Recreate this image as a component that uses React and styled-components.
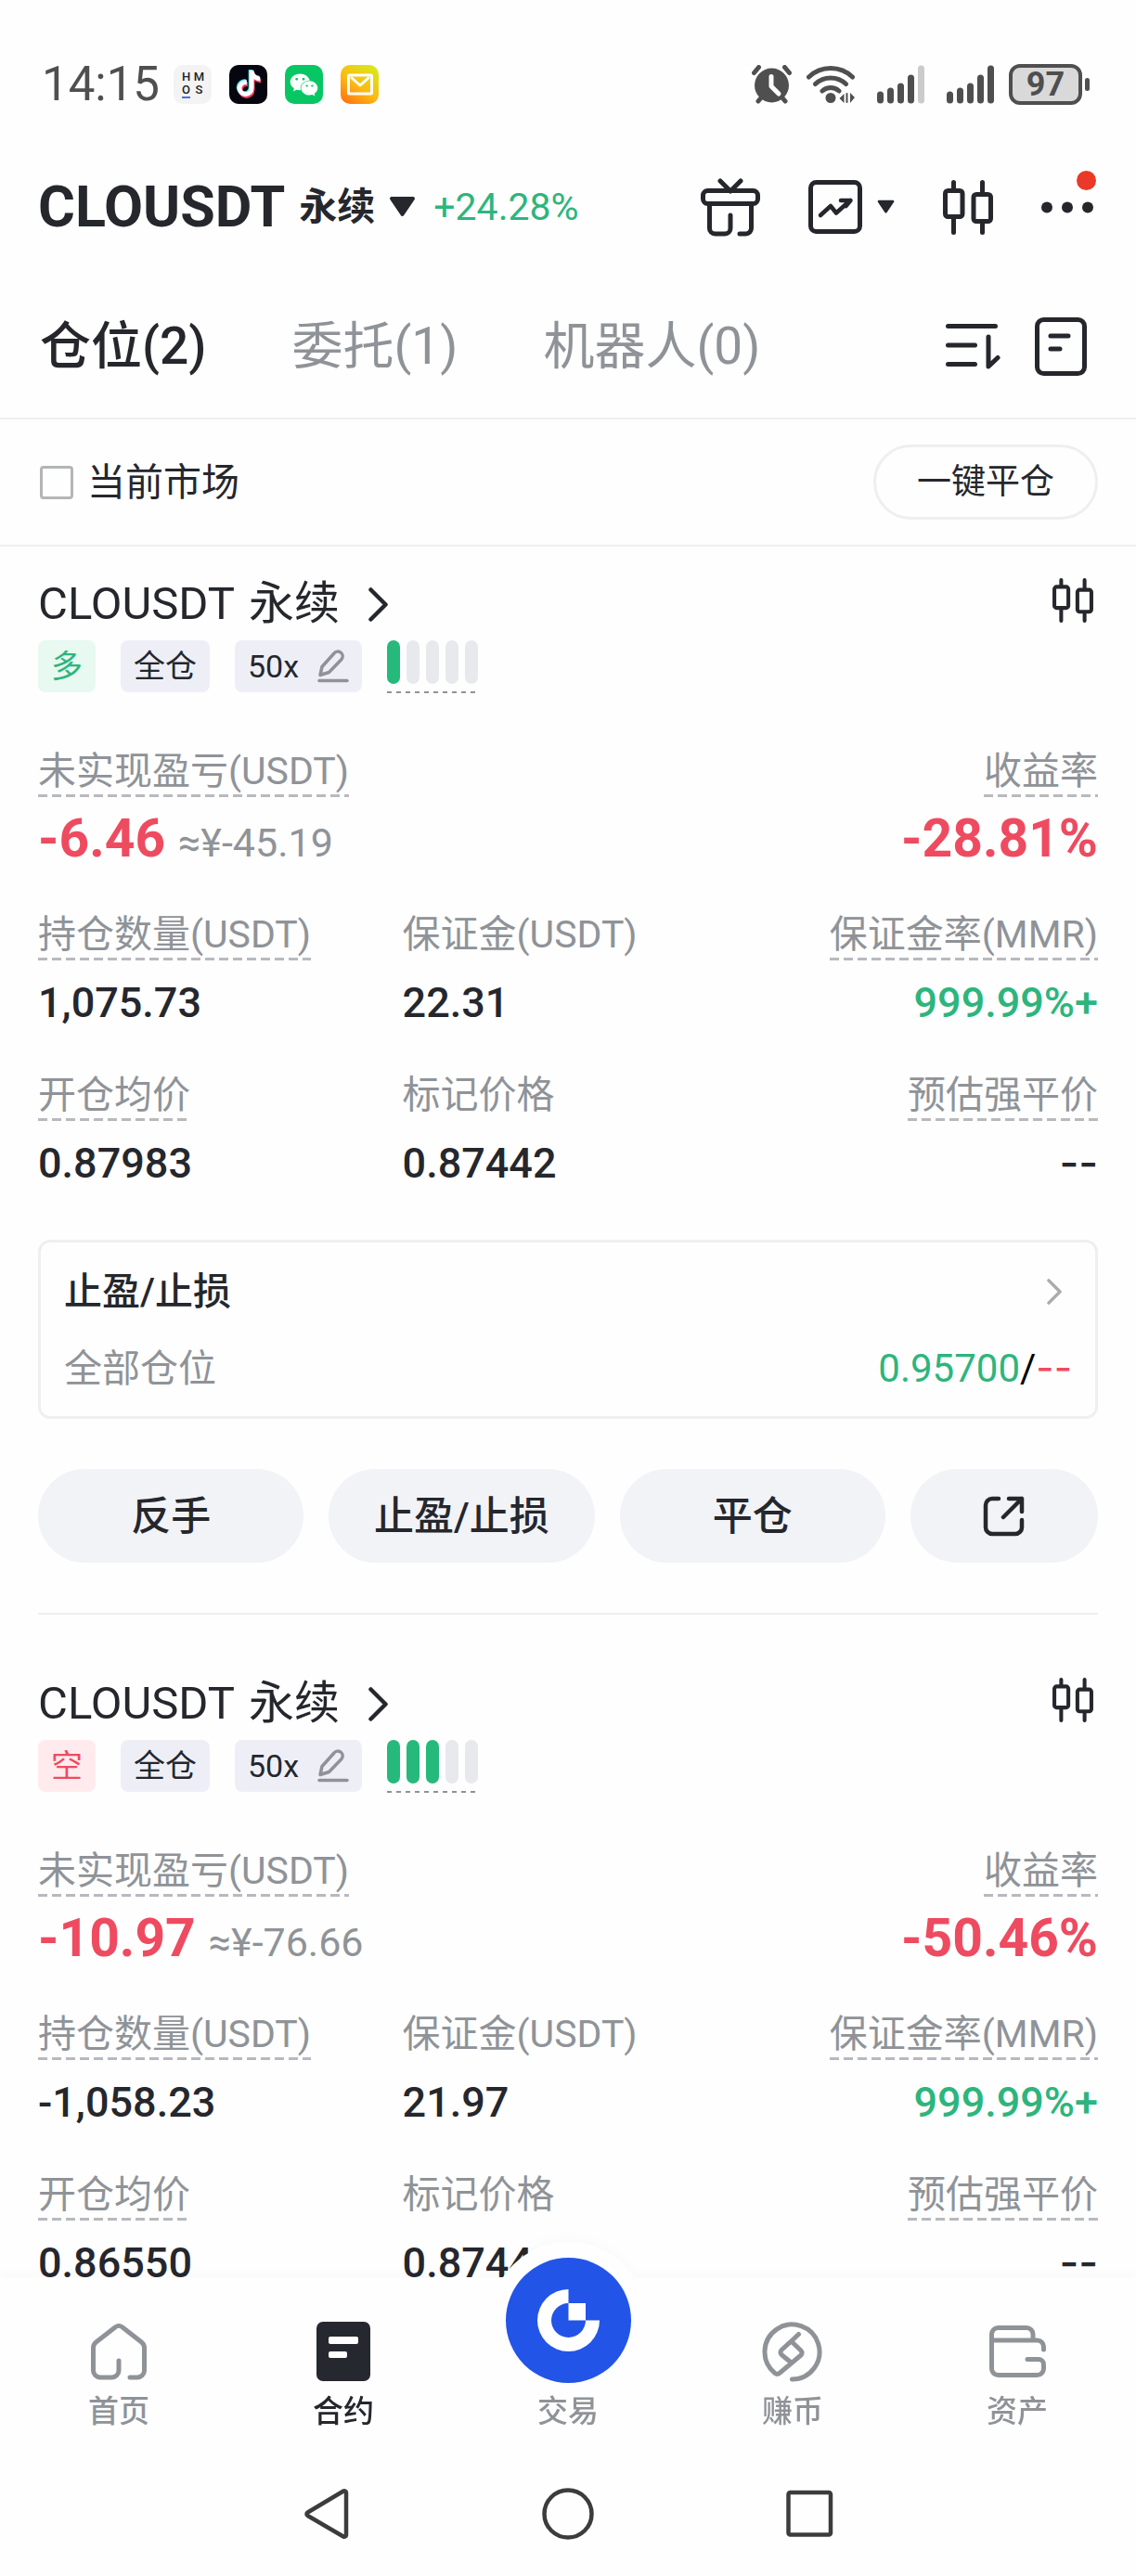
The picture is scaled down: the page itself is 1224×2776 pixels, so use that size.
import { useState } from 'react';
import styled, { createGlobalStyle, css } from 'styled-components';
import { FaTiktok, FaWeixin } from 'react-icons/fa';

const colors = {
  text: '#25272d',
  muted: '#8f9398',
  line: '#eeeff0',
  green: '#2db57d',
  red: '#ee4b60',
  chip: '#eeeff6',
  button: '#f1f3f7',
  system: '#4f4f4f',
  surface: '#fefefe',
};

const GlobalStyle = createGlobalStyle`
  * {
    box-sizing: border-box;
  }

  body {
    margin: 0;
    background-color: ${colors.surface};
    color: ${colors.text};
    font-family: Roboto, 'Noto Sans CJK SC', sans-serif;
  }

  button {
    padding: 0;
    border: none;
    background: none;
    color: inherit;
    font: inherit;
    cursor: pointer;
  }

  a {
    color: inherit;
    text-decoration: none;
  }

  svg {
    display: block;
    flex-shrink: 0;
  }
`;

const Screen = styled.div`
  display: flex;
  flex-direction: column;
  height: 100vh;
  overflow: hidden;
`;

/* Status bar */

const StatusBar = styled.div`
  display: flex;
  align-items: center;
  justify-content: space-between;
  padding: 69px 50px 0 45px;
  color: ${colors.system};
`;

const StatusGroup = styled.div`
  display: flex;
  align-items: center;
  gap: ${({ $gap }) => $gap}px;
`;

const Clock = styled.span`
  margin-right: -4px;
  font-size: 51px;
  line-height: 44px;
`;

const AppBadge = styled.span`
  display: flex;
  align-items: center;
  justify-content: center;
  width: 41px;
  height: 42px;
  border-radius: 10px;
  background: ${({ $background }) => $background};
  color: white;
`;

const HmosLetters = styled.span`
  display: grid;
  grid-template-columns: 14px 14px;
  justify-items: center;
  color: #222;
  font-size: 13px;
  font-weight: 500;
  line-height: 14px;
`;

const HmosUnderlined = styled.span`
  border-bottom: 2px solid #4b6fe0;
`;

const Battery = styled.span`
  display: flex;
  align-items: center;
  gap: 3px;

  &::after {
    content: '';
    width: 5px;
    height: 14px;
    border-radius: 3px;
    background-color: ${colors.system};
  }
`;

const BatteryLevel = styled.span`
  width: 79px;
  height: 44px;
  border: 4px solid ${colors.system};
  border-radius: 12px;
  background-color: #d9d9d9;
  font-size: 36px;
  font-weight: 700;
  line-height: 37px;
  text-align: center;
`;

/* Header */

const Header = styled.header`
  display: flex;
  align-items: center;
  justify-content: space-between;
  margin-top: 74px;
  padding: 0 46px 0 41px;
`;

const PairButton = styled.button`
  display: flex;
  align-items: center;
  gap: 15px;
`;

const PairName = styled.span`
  font-size: 61px;
  font-weight: 700;
  line-height: 72px;
`;

const PairType = styled.span`
  font-size: 41px;
  font-weight: 700;
  line-height: 48px;
`;

const PairChange = styled.span`
  margin-left: 4px;
  color: ${colors.green};
  font-size: 41px;
  line-height: 48px;
`;

const HeaderActions = styled.div`
  display: flex;
  align-items: center;
  gap: 52px;
`;

const IconButton = styled.button`
  position: relative;
  display: flex;
  align-items: center;
  gap: 16px;
`;

const NoticeDot = styled.span`
  position: absolute;
  right: -3px;
  bottom: 25px;
  width: 21px;
  height: 21px;
  border-radius: 50%;
  background-color: #ea3928;
`;

/* Tabs and filter */

const Tabs = styled.nav`
  display: flex;
  align-items: center;
  gap: 92px;
  padding: 82px 53px 45px 43px;
  border-bottom: 2px solid ${colors.line};
`;

const Tab = styled.button`
  color: ${({ $active }) => ($active ? colors.text : colors.muted)};
  font-size: 55px;
  font-weight: ${({ $active }) => ($active ? 500 : 400)};
  line-height: 64px;
`;

const TabTools = styled.div`
  display: flex;
  align-items: center;
  gap: 37px;
  margin-left: auto;
`;

const FilterBar = styled.div`
  display: flex;
  align-items: center;
  justify-content: space-between;
  padding: 27px 41px;
  border-bottom: 2px solid ${colors.line};
`;

const MarketFilter = styled.label`
  display: flex;
  align-items: center;
  gap: 15px;
  font-size: 41px;
  line-height: 48px;
`;

const Checkbox = styled.input`
  appearance: none;
  width: 36px;
  height: 36px;
  margin: 0 0 0 2px;
  border: 3px solid #b3b5b7;
  border-radius: 4px;

  &:checked {
    background-color: ${colors.text};
  }
`;

const CloseAllButton = styled.button`
  height: 81px;
  padding: 0 44px;
  border: 3px solid ${colors.line};
  border-radius: 41px;
  font-size: 37px;
  line-height: 48px;
`;

/* Positions */

const PositionList = styled.main`
  flex: 1;
  min-height: 0;
  padding: 34px 41px 0;
  overflow: hidden;
`;

const Divider = styled.hr`
  height: 2px;
  margin: 54px 0 68px;
  border: none;
  background-color: ${colors.line};
`;

const SpreadRow = styled.div`
  display: flex;
  align-items: center;
  justify-content: space-between;
`;

const PositionHead = styled(SpreadRow)`
  align-items: flex-start;
`;

const PositionTitle = styled.a`
  display: flex;
  align-items: center;
  gap: 15px;
  font-size: 49px;
  line-height: 56px;

  svg {
    margin-left: 16px;
  }
`;

const TagRow = styled.div`
  display: flex;
  align-items: flex-start;
  gap: 27px;
  margin-top: 11px;
`;

const tagStyle = css`
  display: flex;
  align-items: center;
  gap: 20px;
  height: 56px;
  padding: 0 14px;
  border-radius: 8px;
  font-size: 34px;
  line-height: 40px;
`;

const sideStyles = {
  long: css`
    background-color: #e7f9f0;
    color: ${colors.green};
  `,
  short: css`
    background-color: #ffebed;
    color: ${colors.red};
  `,
};

const SideTag = styled.span`
  ${tagStyle}
  ${({ $side }) => sideStyles[$side]}
`;

const ModeTag = styled.span`
  ${tagStyle}
  background-color: ${colors.chip};
`;

const LeverageButton = styled.button`
  ${tagStyle}
  background-color: ${colors.chip};
`;

const dashes = (color, dash, gap) =>
  `repeating-linear-gradient(90deg, ${color} 0 ${dash}px, transparent ${dash}px ${
    dash + gap
  }px)`;

const RiskMeter = styled.div`
  display: flex;
  gap: 7px;
  height: 57px;
  padding-bottom: 10px;
  background: ${dashes('#8f9398', 5, 5)} bottom / 100% 2px no-repeat;
`;

const RiskBar = styled.span`
  width: 14px;
  border-radius: 7px;
  background-color: ${({ $on }) => ($on ? '#26b97c' : '#e8e9ec')};
`;

const Summary = styled.div`
  display: flex;
  justify-content: space-between;
  margin: 60px 0 47px;
`;

const Stats = styled.div`
  display: grid;
  grid-template-columns: 11fr 11fr 10fr;
  row-gap: 47px;
`;

const Stat = styled.div`
  display: flex;
  flex-direction: column;
  align-items: ${({ $right }) => ($right ? 'flex-end' : 'flex-start')};
  gap: ${({ $large }) => ($large ? 13 : 18)}px;
`;

const StatLabel = styled.span`
  padding-bottom: 4px;
  color: ${colors.muted};
  font-size: 41px;
  line-height: 48px;
  white-space: nowrap;

  ${({ $hint }) =>
    $hint &&
    css`
      background: ${dashes('#b8b9c0', 10, 5)} bottom / 100% 3px no-repeat;
    `}
`;

const StatValue = styled.span`
  color: ${({ $color }) => $color || colors.text};
  font-size: 45px;
  font-weight: 500;
  line-height: 56px;
`;

const BigValue = styled.span`
  color: ${colors.red};
  font-size: 57px;
  font-weight: 700;
  line-height: 64px;
`;

const Converted = styled.span`
  margin-left: 14px;
  color: ${colors.muted};
  font-size: 43px;
  font-weight: 400;
  line-height: 48px;
`;

const EmptyValue = styled.span`
  font-family: Inter, sans-serif;
  line-height: 1;
`;

const OrderBox = styled.a`
  display: flex;
  flex-direction: column;
  gap: 35px;
  margin-top: 54px;
  padding: 29px 25px 27px;
  border: 3px solid ${colors.line};
  border-radius: 13px;
  font-size: 41px;
  line-height: 48px;
`;

const OrderTitle = styled.span`
  font-weight: 500;
`;

const OrderScope = styled.span`
  color: ${colors.muted};
`;

const OrderPrices = styled.span`
  color: black;
  font-size: 42px;
`;

const Price = styled.span`
  color: ${({ $color }) => $color};
`;

const Actions = styled.div`
  display: flex;
  gap: 27px;
  margin-top: 54px;
`;

const ActionButton = styled.button`
  display: flex;
  flex: 1;
  align-items: center;
  justify-content: center;
  height: 101px;
  border-radius: 51px;
  background-color: ${colors.button};
  font-size: 43px;
  font-weight: 500;
  line-height: 48px;
`;

const ShareButton = styled(ActionButton)`
  flex: 0 0 202px;
`;

/* Bottom bars */

const BottomBar = styled.footer`
  position: relative;
  z-index: 1;
  background-color: ${colors.surface};
  filter: drop-shadow(0 -3px 6px rgba(0, 0, 30, 0.02));
`;

const AppNav = styled.nav`
  display: grid;
  grid-template-columns: repeat(5, 1fr);
  padding: 47px 7px 0;
`;

const NavItem = styled.a`
  display: flex;
  flex-direction: column;
  align-items: center;
  gap: 13px;
  color: ${({ $active }) => ($active ? colors.text : colors.muted)};
  font-size: 33px;
  font-weight: 500;
  line-height: 40px;
`;

const NavIcon = styled.span`
  display: flex;
  align-items: center;
  height: 64px;
`;

const TradeIcon = styled.span`
  width: 135px;
  height: 135px;
  margin: -69px 0 -2px;
  border-radius: 50%;
  background-color: #2354e8;
  box-shadow: 0 0 0 17px ${colors.surface};
`;

const SystemNav = styled.div`
  display: flex;
  justify-content: center;
  gap: 206px;
  padding: 62px 0 39px;
`;

/* Icons */

const Icon = ({ w, h, box, stroke = 5, color = 'currentColor', children }) => (
  <svg
    width={w}
    height={h}
    viewBox={box || `0 0 ${w} ${h}`}
    fill="none"
    stroke={color}
    strokeWidth={stroke}
    strokeLinecap="round"
    strokeLinejoin="round"
    aria-hidden="true"
  >
    {children}
  </svg>
);

const AlarmIcon = () => (
  <Icon w={43} h={42}>
    <path d="M2.500 8.500l5-6M40.500 8.500l-5-6M7 39l5-6M36 39l-5-6" />
    <circle cx="21.500" cy="22" r="18.500" fill="currentColor" stroke="none" />
    <path d="M21 12.500v10.500l8 8" stroke="#fefefe" />
  </Icon>
);

const WifiIcon = () => (
  <Icon w={52} h={42}>
    <path d="M2.500 13a34 34 0 0 1 47 0M9.500 20.500a24 24 0 0 1 33 0M17 28a13.500 13.500 0 0 1 18 0" />
    <circle cx="26" cy="35.500" r="5.500" fill="currentColor" stroke="none" />
    <path
      d="M35.500 36l5-5v10zM52 35l-5-5v11z"
      fill="currentColor"
      stroke="none"
    />
    <path d="M43.500 31v9" stroke="currentColor" strokeWidth="2" />
  </Icon>
);

const SignalIcon = ({ level }) => (
  <Icon w={51} h={42} stroke={7}>
    {[32, 28, 23, 14, 4].map((top, i) => (
      <path
        key={top}
        d={`M${3.5 + i * 11} ${top}V38`}
        stroke={i < level ? colors.system : '#cbcbcb'}
      />
    ))}
  </Icon>
);

const MailIcon = () => (
  <Icon w={28} h={24} stroke={3}>
    <rect x="1.500" y="2" width="25" height="20" rx="1" />
    <path d="M5 5l9 8 9-8" />
  </Icon>
);

const TiktokIcon = () => (
  <svg width="30" height="34" viewBox="0 0 30 34" aria-hidden="true">
    <FaTiktok x="0" y="1" size="28" color="#3ee5e4" />
    <FaTiktok x="2" y="4" size="28" color="#f0385f" />
    <FaTiktok x="1" y="2" size="28" color="white" />
  </svg>
);

const Triangle = ({ w, h }) => (
  <Icon w={w} h={h} box="0 0 29 24" stroke={4}>
    <path d="M3 3h23L14.500 20z" fill="currentColor" />
  </Icon>
);

const GiftIcon = () => (
  <Icon w={64} h={63}>
    <path d="M21 3l11 11L43 3" />
    <rect x="2.500" y="13.500" width="59" height="14" rx="5" />
    <path d="M9.500 28v26a6 6 0 0 0 6 6H26a6 6 0 0 0 6-6V40M54.500 28v26a6 6 0 0 1-6 6H42" />
  </Icon>
);

const ChartIcon = () => (
  <Icon w={58} h={58}>
    <rect x="2.500" y="2.500" width="53" height="53" rx="6" />
    <path d="M13 38l11-10 6 7.500L45 22M35 22h10.500l-5 6" strokeWidth="4.500" />
  </Icon>
);

const CandlesIcon = ({ w = 54, h = 59 }) => (
  <Icon w={w} h={h} box="0 0 54 59">
    <path d="M11.500 2.500v8M11.500 41v15.500M42.500 2.500v12M42.500 46v10.500" />
    <rect x="2.500" y="11.500" width="18.500" height="28" rx="3" />
    <rect x="33" y="15.500" width="18.500" height="29" rx="3" />
  </Icon>
);

const MoreIcon = () => (
  <Icon w={56} h={13}>
    <g fill="currentColor" stroke="none">
      <circle cx="6" cy="6.500" r="6" />
      <circle cx="28" cy="6.500" r="6" />
      <circle cx="50" cy="6.500" r="6" />
    </g>
  </Icon>
);

const SortIcon = () => (
  <Icon w={59} h={50}>
    <path d="M2.500 3.500h51M2.500 24h29M2.500 44.500h29M46 15v32l10-9.500" />
  </Icon>
);

const RecordsIcon = () => (
  <Icon w={56} h={63}>
    <rect x="2.500" y="2.500" width="51" height="58" rx="7" />
    <path d="M17 20h19M17 34h10" />
  </Icon>
);

const Chevron = ({ w, h, color }) => (
  <Icon w={w} h={h} box="0 0 21 37" color={color} stroke={4.5}>
    <path d="M2.500 2.500l16 16-16 16" />
  </Icon>
);

const PencilIcon = () => (
  <Icon w={34} h={36} color={colors.muted} stroke={3.5}>
    <path d="M3 27.500L5 18.500 18 4a5 5 0 0 1 8 6.500L12.500 24.500z" />
    <path d="M2 33.500h30" />
  </Icon>
);

const ShareIcon = () => (
  <Icon w={45} h={44} stroke={4.5}>
    <path d="M17 3h-7a7 7 0 0 0-7 7v24a7 7 0 0 0 7 7h25a7 7 0 0 0 7-7v-8" />
    <path d="M28 3h14v14M42 3L22 23" />
  </Icon>
);

const HomeIcon = () => (
  <Icon w={60} h={61}>
    <path d="M42 58h8a7.500 7.500 0 0 0 7.500-7.500V26a8 8 0 0 0-3-6L34 4a6 6 0 0 0-8 0L5.500 20a8 8 0 0 0-3 6v24.500A7.500 7.500 0 0 0 10 58h12.500a7.500 7.500 0 0 0 7.500-7.500V40" />
  </Icon>
);

const ContractIcon = () => (
  <Icon w={58} h={64}>
    <rect width="58" height="64" rx="7" fill="#262830" stroke="none" />
    <rect x="13" y="16" width="32" height="8" rx="2" fill="white" stroke="none" />
    <rect x="13" y="32" width="20" height="7" rx="2" fill="white" stroke="none" />
  </Icon>
);

const EarnIcon = () => (
  <Icon w={66} h={65}>
    <path d="M32.500 62A29.500 29.500 0 1 0 14 55.500q3 2 6-1L42 36a4 4 0 0 0 0-5L31.500 21 21 30.500a4 4 0 0 0 0 5L31.500 44M31.500 21l8-7.500" />
  </Icon>
);

const WalletIcon = () => (
  <Icon w={61} h={56}>
    <path d="M58.500 26v-3a7 7 0 0 0-7-7h-49M47 16V9.500a7 7 0 0 0-7-7H9.500a7 7 0 0 0-7 7v37a7 7 0 0 0 7 7h42a7 7 0 0 0 7-7V42a5.500 5.500 0 0 0-5.500-5.500H41" />
  </Icon>
);

const TradeLogo = () => (
  <svg width="135" height="135" viewBox="0 0 135 135" aria-hidden="true">
    <path
      d="M67.500 34v15a18.500 18.500 0 1 0 18.500 18.500h15A33.500 33.500 0 1 1 67.500 34z"
      fill="white"
    />
    <path d="M67.500 49H86v18.500H67.500z" fill="white" />
  </svg>
);

const BackIcon = () => (
  <Icon w={56} h={56} color="#3c3c3c" stroke={4.5}>
    <path d="M51 5v46a2 2 0 0 1-3 1.500L9.500 30a2 2 0 0 1 0-3.500L48 3.500A2 2 0 0 1 51 5z" />
  </Icon>
);

const CircleIcon = () => (
  <Icon w={56} h={56} color="#3c3c3c" stroke={4.5}>
    <circle cx="28" cy="28" r="25.500" />
  </Icon>
);

const SquareIcon = () => (
  <Icon w={56} h={56} color="#3c3c3c" stroke={4.5}>
    <rect x="3.500" y="5" width="45.500" height="45.500" rx="2" />
  </Icon>
);

const tabs = ['仓位(2)', '委托(1)', '机器人(0)'];

const positions = [
  {
    id: 'long',
    sideLabel: '多',
    risk: 1,
    pnl: '-6.46',
    converted: '≈¥-45.19',
    rate: '-28.81%',
    size: '1,075.73',
    margin: '22.31',
    entry: '0.87983',
    mark: '0.87442',
    takeProfit: '0.95700',
  },
  {
    id: 'short',
    sideLabel: '空',
    risk: 3,
    pnl: '-10.97',
    converted: '≈¥-76.66',
    rate: '-50.46%',
    size: '-1,058.23',
    margin: '21.97',
    entry: '0.86550',
    mark: '0.87442',
  },
];

const navItems = [
  { label: '首页', icon: <HomeIcon /> },
  { label: '合约', icon: <ContractIcon />, active: true },
  { label: '交易', trade: true },
  { label: '赚币', icon: <EarnIcon /> },
  { label: '资产', icon: <WalletIcon /> },
];

function Position({ position }) {
  return (
    <article>
      <PositionHead>
        <PositionTitle href="#contract">
          <span>CLOUSDT</span>
          <span>永续</span>
          <Chevron w={21} h={37} />
        </PositionTitle>
        <IconButton aria-label="K线">
          <CandlesIcon w={54} h={48} />
        </IconButton>
      </PositionHead>
      <TagRow>
        <SideTag $side={position.id}>{position.sideLabel}</SideTag>
        <ModeTag>全仓</ModeTag>
        <LeverageButton>
          50x
          <PencilIcon />
        </LeverageButton>
        <RiskMeter>
          {[0, 1, 2, 3, 4].map(i => (
            <RiskBar key={i} $on={i < position.risk} />
          ))}
        </RiskMeter>
      </TagRow>

      <Summary>
        <Stat $large>
          <StatLabel $hint>未实现盈亏(USDT)</StatLabel>
          <BigValue>
            {position.pnl}
            <Converted>{position.converted}</Converted>
          </BigValue>
        </Stat>
        <Stat $large $right>
          <StatLabel $hint>收益率</StatLabel>
          <BigValue>{position.rate}</BigValue>
        </Stat>
      </Summary>

      <Stats>
        <Stat>
          <StatLabel $hint>持仓数量(USDT)</StatLabel>
          <StatValue>{position.size}</StatValue>
        </Stat>
        <Stat>
          <StatLabel>保证金(USDT)</StatLabel>
          <StatValue>{position.margin}</StatValue>
        </Stat>
        <Stat $right>
          <StatLabel $hint>保证金率(MMR)</StatLabel>
          <StatValue $color={colors.green}>999.99%+</StatValue>
        </Stat>
        <Stat>
          <StatLabel $hint>开仓均价</StatLabel>
          <StatValue>{position.entry}</StatValue>
        </Stat>
        <Stat>
          <StatLabel>标记价格</StatLabel>
          <StatValue>{position.mark}</StatValue>
        </Stat>
        <Stat $right>
          <StatLabel $hint>预估强平价</StatLabel>
          <StatValue>
            <EmptyValue>--</EmptyValue>
          </StatValue>
        </Stat>
      </Stats>

      {position.takeProfit && (
        <>
          <OrderBox href="#orders">
            <SpreadRow>
              <OrderTitle>止盈/止损</OrderTitle>
              <Chevron w={38} h={28} color="#a9abae" />
            </SpreadRow>
            <SpreadRow>
              <OrderScope>全部仓位</OrderScope>
              <OrderPrices>
                <Price $color={colors.green}>{position.takeProfit}</Price>/
                <Price $color={colors.red}>
                  <EmptyValue>--</EmptyValue>
                </Price>
              </OrderPrices>
            </SpreadRow>
          </OrderBox>
          <Actions>
            <ActionButton>反手</ActionButton>
            <ActionButton>止盈/止损</ActionButton>
            <ActionButton>平仓</ActionButton>
            <ShareButton aria-label="分享">
              <ShareIcon />
            </ShareButton>
          </Actions>
          <Divider />
        </>
      )}
    </article>
  );
}

export default function App() {
  const [activeTab, setActiveTab] = useState(0);
  const [onlyCurrent, setOnlyCurrent] = useState(false);

  return (
    <>
      <GlobalStyle />
      <Screen>
        <StatusBar>
          <StatusGroup $gap={19}>
            <Clock>14:15</Clock>
            <AppBadge $background="#f3f3f4">
              <HmosLetters>
                <span>H</span>
                <span>M</span>
                <HmosUnderlined>O</HmosUnderlined>
                <span>S</span>
              </HmosLetters>
            </AppBadge>
            <AppBadge $background="#05060f">
              <TiktokIcon />
            </AppBadge>
            <AppBadge $background="#07c765">
              <FaWeixin size={31} />
            </AppBadge>
            <AppBadge $background="linear-gradient(35deg, #ff6a10, #fdb913 45%, #d2f01c)">
              <MailIcon />
            </AppBadge>
          </StatusGroup>
          <StatusGroup $gap={16}>
            <AlarmIcon />
            <StatusGroup $gap={24}>
              <WifiIcon />
              <SignalIcon level={4} />
              <SignalIcon level={5} />
            </StatusGroup>
            <Battery>
              <BatteryLevel>97</BatteryLevel>
            </Battery>
          </StatusGroup>
        </StatusBar>

        <Header>
          <PairButton>
            <PairName>CLOUSDT</PairName>
            <PairType>永续</PairType>
            <Triangle w={29} h={24} />
            <PairChange>+24.28%</PairChange>
          </PairButton>
          <HeaderActions>
            <IconButton aria-label="活动">
              <GiftIcon />
            </IconButton>
            <IconButton aria-label="图表">
              <ChartIcon />
              <Triangle w={19} h={16} />
            </IconButton>
            <IconButton aria-label="K线">
              <CandlesIcon />
            </IconButton>
            <IconButton aria-label="更多">
              <MoreIcon />
              <NoticeDot />
            </IconButton>
          </HeaderActions>
        </Header>

        <Tabs>
          {tabs.map((tab, i) => (
            <Tab
              key={tab}
              $active={i === activeTab}
              onClick={() => setActiveTab(i)}
            >
              {tab}
            </Tab>
          ))}
          <TabTools>
            <IconButton aria-label="排序">
              <SortIcon />
            </IconButton>
            <IconButton aria-label="记录">
              <RecordsIcon />
            </IconButton>
          </TabTools>
        </Tabs>

        <FilterBar>
          <MarketFilter>
            <Checkbox
              type="checkbox"
              checked={onlyCurrent}
              onChange={e => setOnlyCurrent(e.target.checked)}
            />
            当前市场
          </MarketFilter>
          <CloseAllButton>一键平仓</CloseAllButton>
        </FilterBar>

        <PositionList>
          {positions.map(position => (
            <Position key={position.id} position={position} />
          ))}
        </PositionList>

        <BottomBar>
          <AppNav>
            {navItems.map(({ label, icon, active, trade }) => (
              <NavItem key={label} href={`#${label}`} $active={active}>
                {trade ? (
                  <TradeIcon>
                    <TradeLogo />
                  </TradeIcon>
                ) : (
                  <NavIcon>{icon}</NavIcon>
                )}
                {label}
              </NavItem>
            ))}
          </AppNav>
          <SystemNav>
            <IconButton aria-label="返回">
              <BackIcon />
            </IconButton>
            <IconButton aria-label="主屏幕">
              <CircleIcon />
            </IconButton>
            <IconButton aria-label="最近任务">
              <SquareIcon />
            </IconButton>
          </SystemNav>
        </BottomBar>
      </Screen>
    </>
  );
}
